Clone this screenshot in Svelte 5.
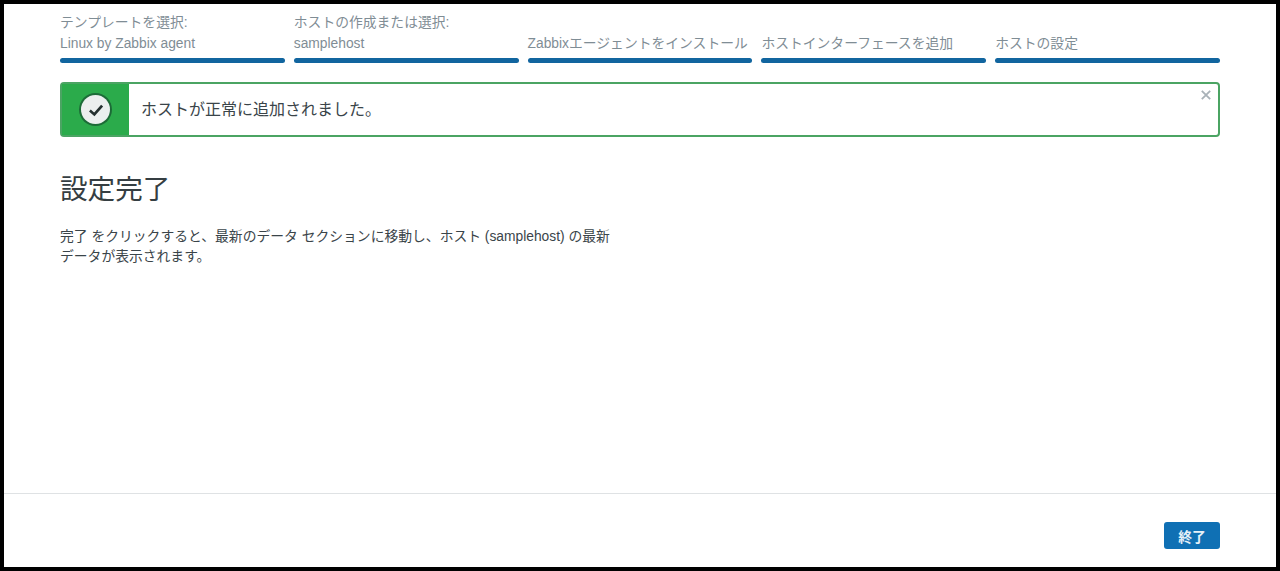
<script>
	const steps = [
		{ label: 'テンプレートを選択:', value: 'Linux by Zabbix agent' },
		{ label: 'ホストの作成または選択:', value: 'samplehost' },
		{ label: '', value: 'Zabbixエージェントをインストール' },
		{ label: '', value: 'ホストインターフェースを追加' },
		{ label: '', value: 'ホストの設定' }
	];
</script>

<div class="frame">
	<main class="content">
		<ol class="steps">
			{#each steps as step}
				<li class="step">
					<span class="step-label">{step.label}</span>
					<span class="step-value">{step.value}</span>
					<span class="step-bar"></span>
				</li>
			{/each}
		</ol>

		<div class="alert">
			<div class="alert-icon">
				<span class="check">
					<svg width="20" height="20" viewBox="0 0 18 18" fill="none">
						<path d="M3.5 9.5 7.5 13 14.5 5" stroke="#24302f" stroke-width="2.4" />
					</svg>
				</span>
			</div>
			<p class="alert-text">ホストが正常に追加されました。</p>
			<button class="close" aria-label="閉じる">
				<svg width="10" height="10" viewBox="0 0 10 10">
					<path d="M.8.8l8.4 8.4M9.2.8.8 9.2" stroke="#a9b2b8" stroke-width="1.8" />
				</svg>
			</button>
		</div>

		<h1>設定完了</h1>
		<p class="desc">完了 をクリックすると、最新のデータ セクションに移動し、ホスト (samplehost) の最新データが表示されます。</p>
	</main>

	<footer class="footer">
		<button class="finish">終了</button>
	</footer>
</div>

<style>
	:global(body) {
		background: #000;
	}

	.frame {
		box-sizing: border-box;
		height: 563px;
		margin: 4px;
		background: #fff;
		display: flex;
		flex-direction: column;
		font-family: 'Liberation Sans', 'Noto Sans CJK JP', sans-serif;
		color: #1f2c33;
	}

	.content {
		flex: 1;
		padding: 0 56px;
	}

	.steps {
		display: grid;
		grid-template-columns: repeat(5, 1fr);
		gap: 9px;
		margin: 0;
		padding: 0;
		list-style: none;
	}

	.step {
		display: flex;
		flex-direction: column;
		padding-top: 9px;
		font-size: 13.8px;
		line-height: 20px;
		color: #7f8d95;
		white-space: nowrap;
	}

	.step-label {
		height: 21px;
	}

	.step-bar {
		height: 5px;
		margin-top: 4px;
		border-radius: 3px;
		background: #11659f;
	}

	.alert {
		display: flex;
		align-items: center;
		position: relative;
		box-sizing: border-box;
		height: 55px;
		margin-top: 19px;
		border: 2px solid #4ba463;
		border-radius: 4px;
	}

	.alert-icon {
		align-self: stretch;
		width: 67px;
		display: flex;
		align-items: center;
		justify-content: center;
		background: #2bab4b;
	}

	.check {
		width: 29px;
		height: 29px;
		border-radius: 50%;
		display: flex;
		align-items: center;
		justify-content: center;
		background: #ebefee;
		box-shadow: 0 0 0 2px #1c6b37;
	}

	.alert-text {
		margin: 0 0 3px 12px;
		font-size: 16px;
		color: #3a4449;
	}

	.close {
		position: absolute;
		top: 6px;
		right: 7px;
		padding: 0;
		border: 0;
		background: none;
		line-height: 0;
	}

	h1 {
		margin: 34px 0 0;
		font-size: 27.6px;
		line-height: 38px;
		font-weight: 400;
		color: #353e42;
	}

	.desc {
		width: 556px;
		margin: 18px 0 0;
		font-size: 13.8px;
		line-height: 20px;
		color: #3a4449;
	}

	.footer {
		display: flex;
		justify-content: flex-end;
		height: 74px;
		padding: 28px 56px 0;
		box-sizing: border-box;
		border-top: 1px solid #dfe2e4;
	}

	.finish {
		width: 56px;
		height: 27px;
		padding: 0;
		border: 0;
		border-radius: 3px;
		background: #0f70b4;
		color: #e6f1f8;
		font: 700 13.8px 'Liberation Sans', 'Noto Sans CJK JP', sans-serif;
	}
</style>
